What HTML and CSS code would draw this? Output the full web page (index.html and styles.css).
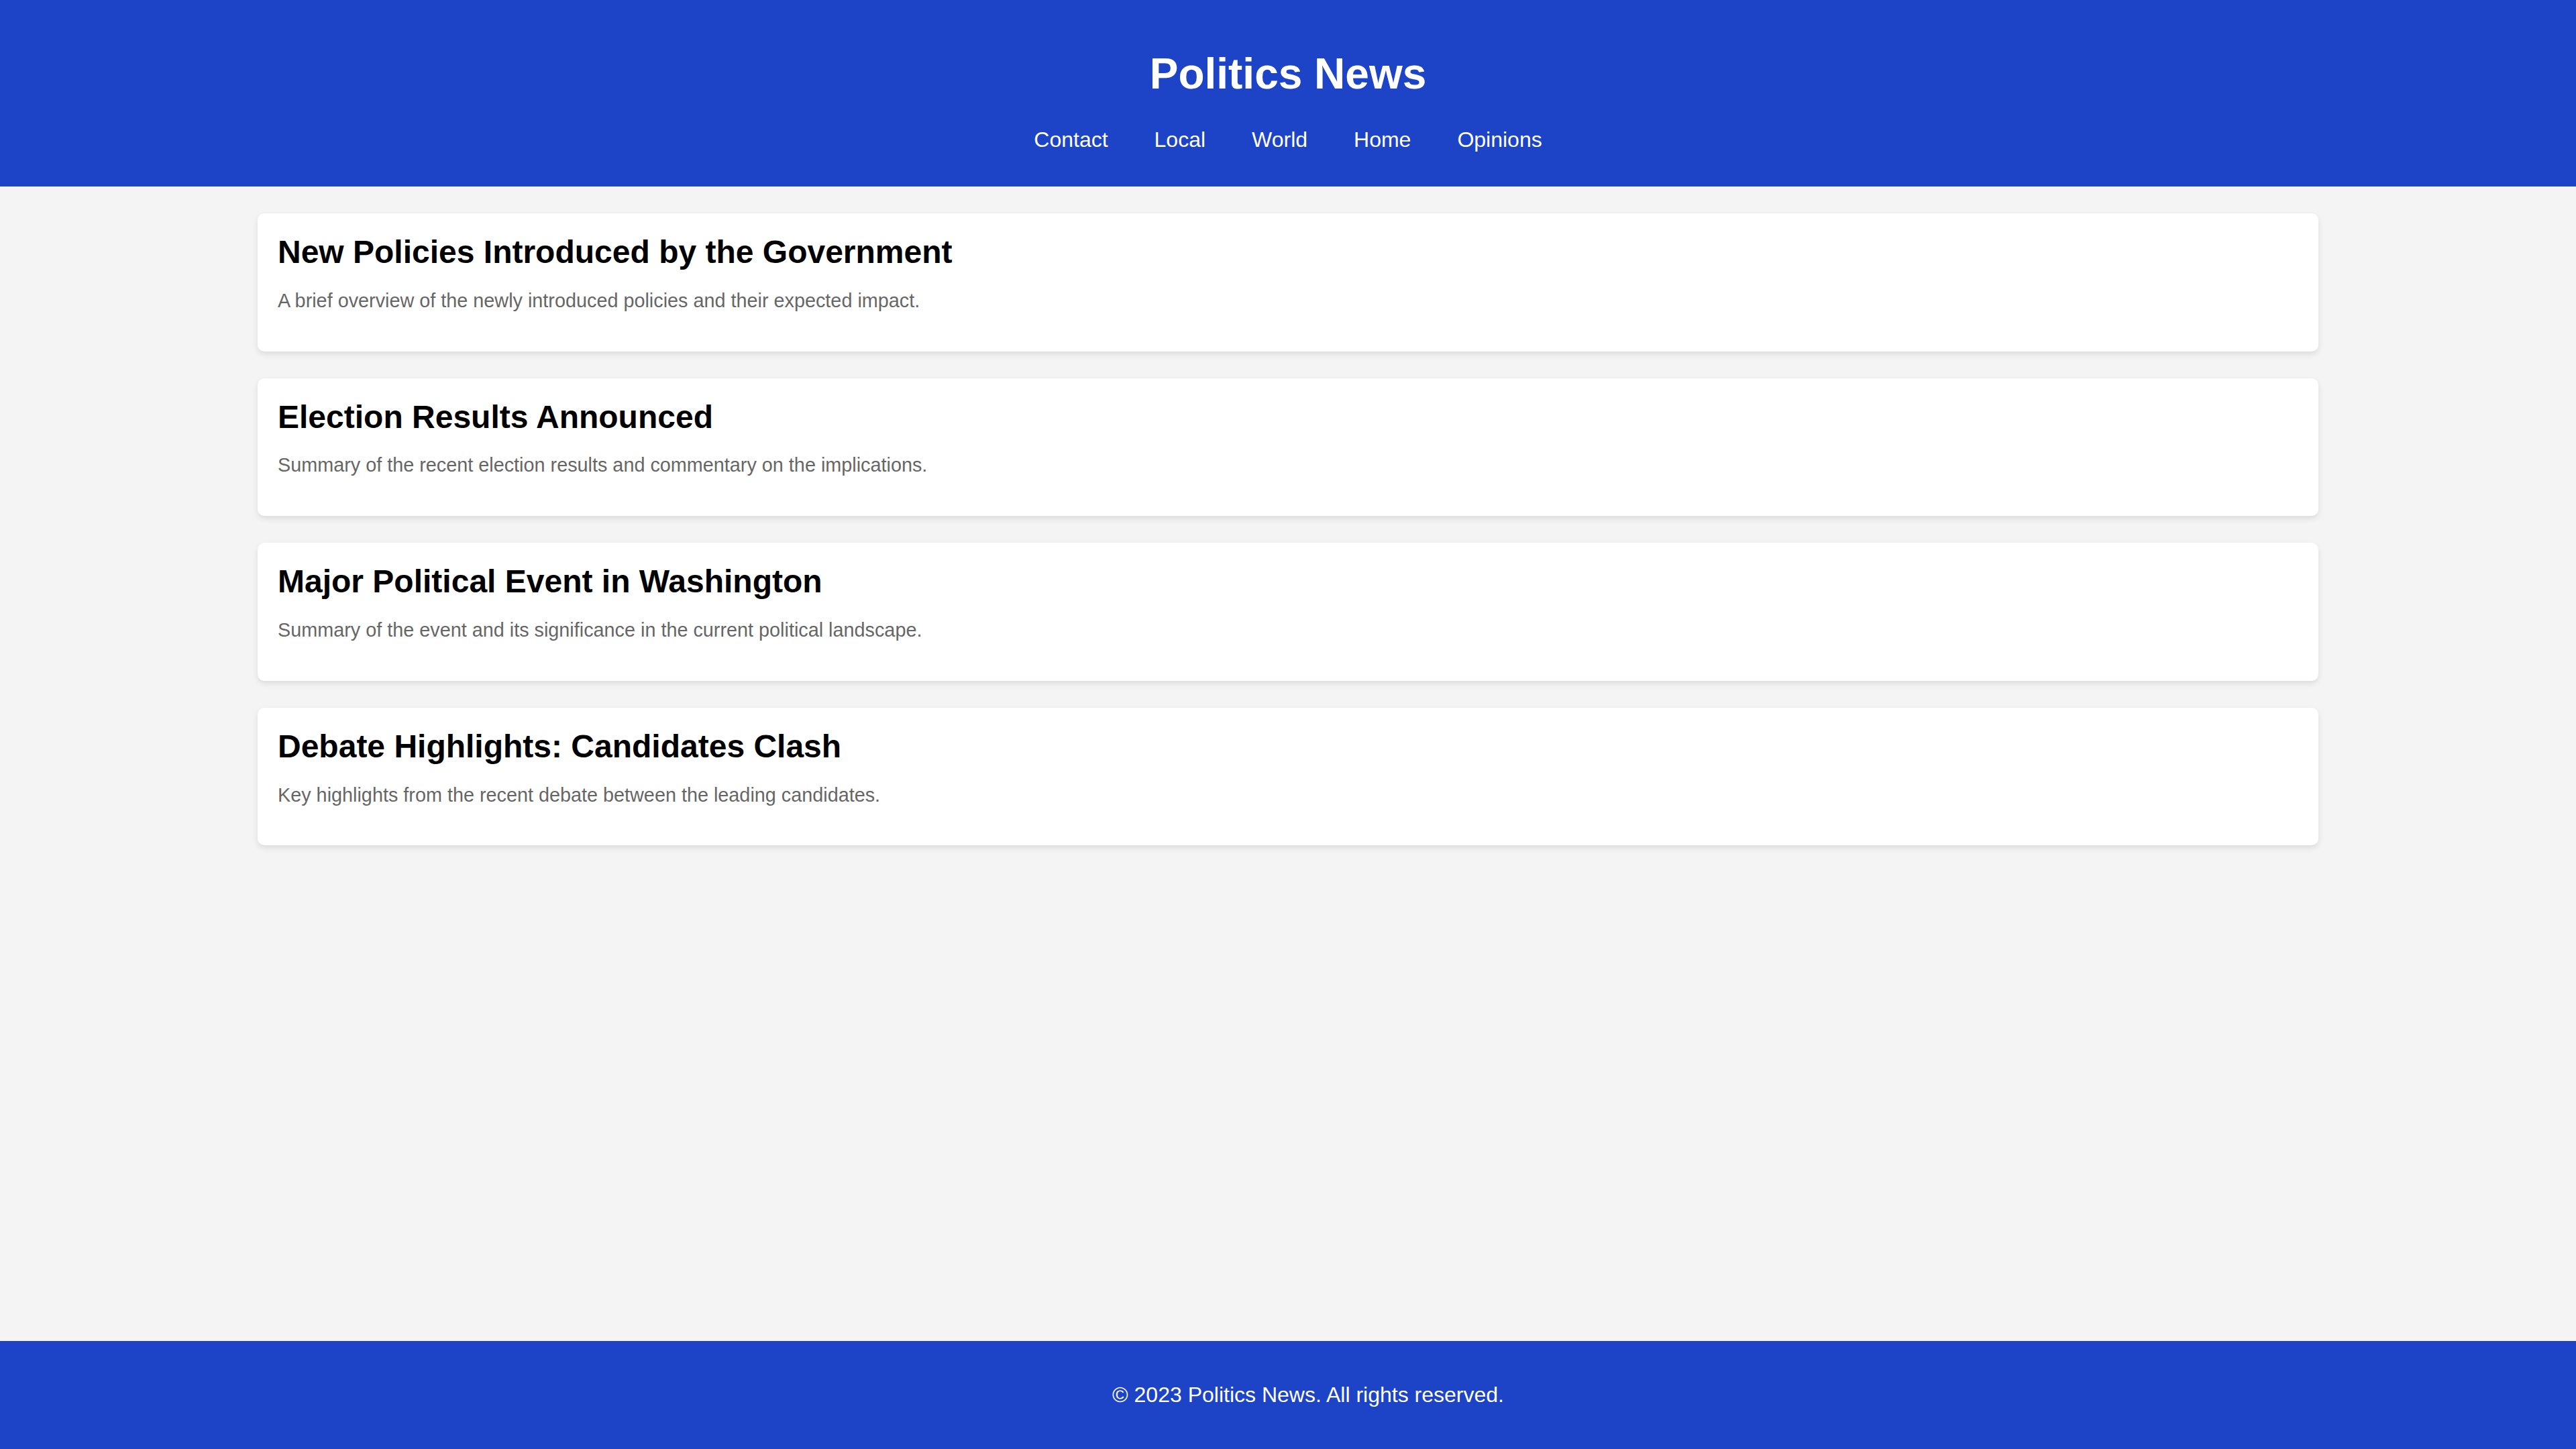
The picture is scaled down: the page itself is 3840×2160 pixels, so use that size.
FILE: index.html
```html
<!DOCTYPE html>
<html lang="en">
<head>
<meta charset="utf-8">
<title>Politics News</title>
<link rel="stylesheet" href="styles.css">
</head>
<body>
<header class="site-header">
  <h1 class="site-title">Politics News</h1>
  <nav class="site-nav">
    <a href="#">Contact</a>
    <a href="#">Local</a>
    <a href="#">World</a>
    <a href="#">Home</a>
    <a href="#">Opinions</a>
  </nav>
</header>
<main class="content">
  <article class="card">
    <h2 class="card-title">New Policies Introduced by the Government</h2>
    <p class="card-text">A brief overview of the newly introduced policies and their expected impact.</p>
  </article>
  <article class="card">
    <h2 class="card-title">Election Results Announced</h2>
    <p class="card-text">Summary of the recent election results and commentary on the implications.</p>
  </article>
  <article class="card">
    <h2 class="card-title">Major Political Event in Washington</h2>
    <p class="card-text">Summary of the event and its significance in the current political landscape.</p>
  </article>
  <article class="card">
    <h2 class="card-title">Debate Highlights: Candidates Clash</h2>
    <p class="card-text">Key highlights from the recent debate between the leading candidates.</p>
  </article>
</main>
<footer class="site-footer">
  <p class="footer-text">© 2023 Politics News. All rights reserved.</p>
</footer>
</body>
</html>
```
FILE: styles.css
```css
* { box-sizing: border-box; }
html, body { height: 100%; }
body {
  margin: 0;
  min-height: 100vh;
  display: flex;
  flex-direction: column;
  background: #f4f4f4;
  font-family: "Liberation Sans", Arial, sans-serif;
  font-size: 32px;
  color: #000;
}
.site-header {
  background: #1d44c6;
  color: #fff;
  text-align: center;
  padding: 30px 0 51px;
}
.site-title {
  margin: 43px 0;
  font-size: 64px;
  font-weight: bold;
  line-height: normal;
}
.site-nav {
  display: flex;
  justify-content: center;
  gap: 69px;
  line-height: normal;
}
.site-nav a {
  color: #fff;
  text-decoration: none;
  font-size: 32px;
}
.content {
  flex: 1;
  width: 80%;
  margin: 40px auto 0;
}
.card {
  background: #fff;
  border-radius: 10px;
  box-shadow: 0 4px 10px rgba(0,0,0,0.1);
  padding: 30px;
  margin-bottom: 40px;
}
.card-title {
  margin: 0 0 20px;
  font-size: 48px;
  font-weight: bold;
  line-height: normal;
}
.card-text {
  margin: 28.8px 0;
  font-size: 28.8px;
  color: #666;
  line-height: normal;
}
.site-footer {
  background: #1d44c6;
  color: #fff;
  text-align: center;
  padding: 30px 0 30px 60px;
}
.footer-text {
  margin: 32px 0;
  font-size: 32px;
  line-height: normal;
}
```
